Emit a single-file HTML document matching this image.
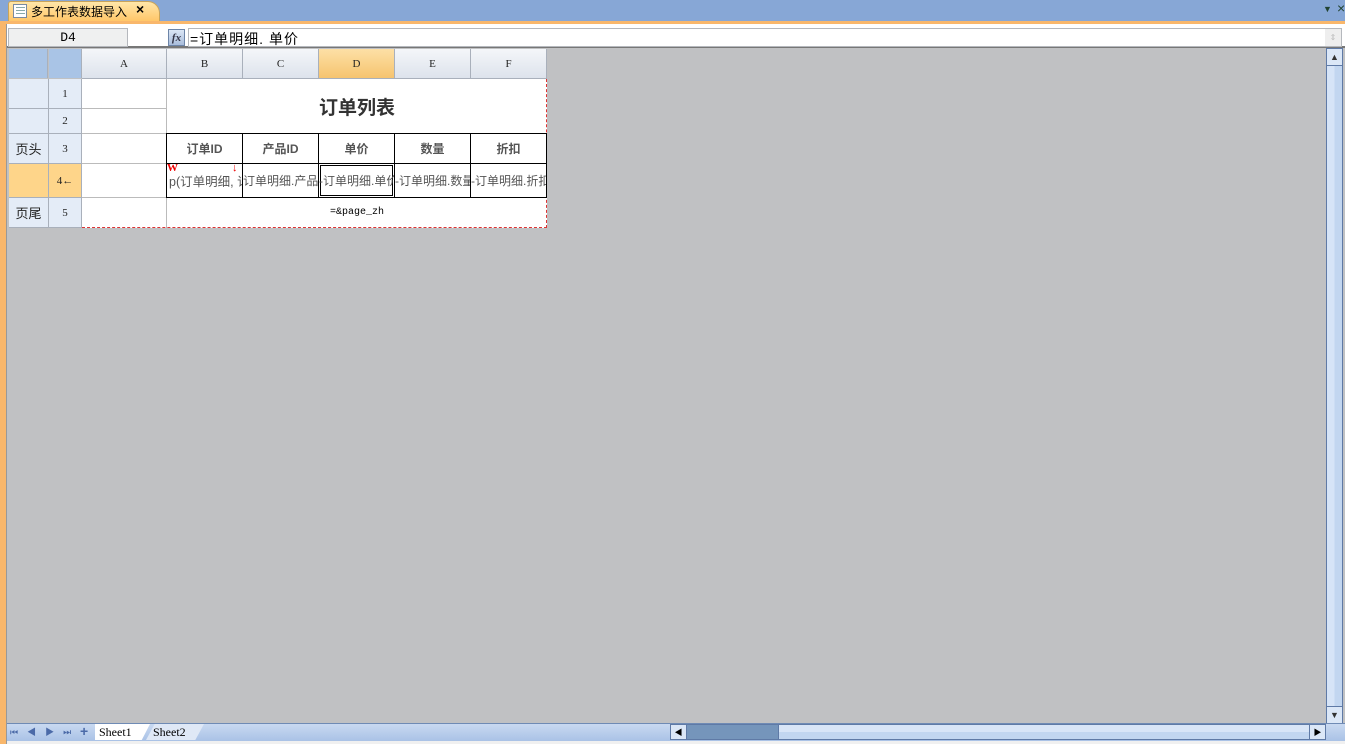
<!DOCTYPE html>
<html><head><meta charset="utf-8">
<style>
*{margin:0;padding:0;box-sizing:border-box}
body{width:1345px;height:744px;overflow:hidden;background:#c0c1c3;position:relative;font-family:"Liberation Sans","Noto Sans CJK SC",sans-serif;font-size:12px}
.a{position:absolute}
.c{position:absolute;display:flex;align-items:center;justify-content:center;white-space:nowrap;overflow:hidden}
.hd{background:linear-gradient(#f4f6f9,#dde3ec);border-right:1px solid #a9b0bb;border-bottom:1px solid #a9b0bb;font-family:"Liberation Serif",serif;font-size:11px;color:#222}
.rh{background:#e4ecf7;border-right:1px solid #a9b0bb;border-bottom:1px solid #a9b0bb;color:#222}
.w{background:#fff}
.b{border:1px solid #000;background:#fff;color:#555;font-weight:bold;font-size:12px}
.d{border:1px solid #000;background:#fff;color:#555;font-size:12px;justify-content:flex-start}
</style></head><body>
<div class="a" style="left:0;top:0;width:1345px;height:21px;background:#87a7d6"></div>
<div class="a" style="left:8px;top:1px;width:152px;height:21px;background:linear-gradient(#ffe6a8,#ffc566);border:1px solid #c9a45a;border-bottom:none;border-radius:3px 12px 0 0"></div>
<div class="a" style="left:13px;top:4px;width:14px;height:14px;background:#fff;border:1px solid #7a8aa0"></div>
<div class="a" style="left:16px;top:7px;width:9px;height:1px;background:#8aa;box-shadow:0 3px #8aa,0 6px #8aa"></div>
<div class="a" style="left:31px;top:3px;font-size:12px;color:#000">多工作表数据导入</div>
<div class="a" style="left:136px;top:1px;font-size:14px;font-weight:bold;color:#000">×</div>
<div class="a" style="left:1323px;top:4px;font-size:9px;color:#243;">▼</div>
<div class="a" style="left:1337px;top:0px;font-size:14px;color:#243;">×</div>
<div class="a" style="left:0;top:21px;width:1345px;height:3px;background:#f9b76b"></div>
<div class="a" style="left:0;top:24px;width:7px;height:720px;background:#f9b76b;border-right:1px solid #999"></div>
<div class="a" style="left:7px;top:24px;width:1338px;height:2px;background:#fff"></div>
<div class="a" style="left:7px;top:26px;width:1338px;height:22px;background:#fff;border-bottom:2px solid #777"></div>
<div class="c" style="left:8px;top:28px;width:120px;height:19px;background:#eff0f0;border:1px solid #b5b8bd;font-family:'Liberation Mono',monospace;font-size:13px">D4</div>
<div class="c" style="left:168px;top:29px;width:17px;height:17px;background:linear-gradient(#dbe6f5,#a9bddb);border:1px solid #6d85a8;font-family:'Liberation Serif',serif;font-style:italic;font-weight:bold;font-size:11px;color:#334">fx</div>
<div class="a" style="left:188px;top:28px;width:1154px;height:19px;border:1px solid #b5b8bd;background:#fff"></div>
<div class="a" style="left:190px;top:29px;font-size:14px;color:#000;letter-spacing:1px">=订单明细. 单价</div>
<div class="c" style="left:1325px;top:29px;width:16px;height:17px;background:#eee;color:#bbb;font-size:8px">⇕</div>
<div class="a" style="left:9px;top:49px;width:39px;height:29px;background:#a9c4e6;border-right:1px solid #a9b0bb"></div>
<div class="a" style="left:49px;top:49px;width:33px;height:29px;background:#a9c4e6;border-right:1px solid #a9b0bb"></div>
<div class="c hd" style="left:82px;top:49px;width:85px;height:30px">A</div>
<div class="c hd" style="left:167px;top:49px;width:76px;height:30px">B</div>
<div class="c hd" style="left:243px;top:49px;width:76px;height:30px">C</div>
<div class="c hd" style="left:319px;top:49px;width:76px;height:30px;background:linear-gradient(#fde0a6,#f6c46f)">D</div>
<div class="c hd" style="left:395px;top:49px;width:76px;height:30px">E</div>
<div class="c hd" style="left:471px;top:49px;width:76px;height:30px">F</div>
<div class="c rh" style="left:9px;top:79px;width:40px;height:30px"></div>
<div class="c rh" style="left:49px;top:79px;width:33px;height:30px;font-family:'Liberation Serif';font-size:11px">1</div>
<div class="c rh" style="left:9px;top:109px;width:40px;height:25px"></div>
<div class="c rh" style="left:49px;top:109px;width:33px;height:25px;font-family:'Liberation Serif';font-size:11px">2</div>
<div class="c rh" style="left:9px;top:134px;width:40px;height:30px;font-size:13px">页头</div>
<div class="c rh" style="left:49px;top:134px;width:33px;height:30px;font-family:'Liberation Serif';font-size:11px">3</div>
<div class="c rh" style="left:9px;top:164px;width:40px;height:34px;background:#fed58a"></div>
<div class="c rh" style="left:49px;top:164px;width:33px;height:34px;background:#fed58a;font-family:'Liberation Serif';font-size:11px">4←</div>
<div class="c rh" style="left:9px;top:198px;width:40px;height:30px;font-size:13px">页尾</div>
<div class="c rh" style="left:49px;top:198px;width:33px;height:30px;font-family:'Liberation Serif';font-size:11px">5</div>
<div class="a w" style="left:82px;top:79px;width:465px;height:149px;border-right:1px dashed #d33;border-bottom:1px dashed #d33"></div>
<div class="a" style="left:82px;top:108px;width:85px;height:1px;background:#bbb"></div>
<div class="a" style="left:82px;top:133px;width:85px;height:1px;background:#bbb"></div>
<div class="a" style="left:82px;top:163px;width:85px;height:1px;background:#bbb"></div>
<div class="a" style="left:82px;top:197px;width:85px;height:1px;background:#bbb"></div>
<div class="a" style="left:166px;top:79px;width:1px;height:149px;background:#bbb"></div>
<div class="c" style="left:167px;top:79px;width:380px;height:55px;font-size:19px;font-weight:bold;color:#333">订单列表</div>
<div class="c b" style="left:166px;top:133px;width:77px;height:31px">订单ID</div>
<div class="c b" style="left:242px;top:133px;width:77px;height:31px">产品ID</div>
<div class="c b" style="left:318px;top:133px;width:77px;height:31px">单价</div>
<div class="c b" style="left:394px;top:133px;width:77px;height:31px">数量</div>
<div class="c b" style="left:470px;top:133px;width:77px;height:31px">折扣</div>
<div class="c d" style="left:166px;top:163px;width:77px;height:35px;padding-left:2px;font-size:12.5px">p(订单明细, 订</div>
<div class="c d" style="left:242px;top:163px;width:77px;height:35px">订单明细.产品</div>
<div class="c d" style="left:318px;top:163px;width:77px;height:35px;box-shadow:inset 0 0 0 1px #fff,inset 0 0 0 2px #000">-订单明细.单价</div>
<div class="c d" style="left:394px;top:163px;width:77px;height:35px">-订单明细.数量</div>
<div class="c d" style="left:470px;top:163px;width:77px;height:35px">-订单明细.折扣</div>
<div class="a" style="left:167px;top:162px;color:#e00;font-weight:bold;font-size:11px;font-family:'Liberation Serif',serif">W</div>
<div class="a" style="left:232px;top:162px;color:#e00;font-size:11px">↓</div>
<div class="c" style="left:167px;top:198px;width:380px;height:29px;font-family:'Liberation Mono',monospace;font-size:10px;color:#000">=&amp;page_zh</div>
<div class="a" style="left:1326px;top:48px;width:17px;height:676px;background:linear-gradient(90deg,#d6e4f7 50%,#c2d6f0 50%);border:1px solid #5f7aa6"></div>
<div class="c" style="left:1326px;top:48px;width:17px;height:18px;background:#dbe7f7;border:1px solid #5f7aa6;font-size:9px;color:#333">▲</div>
<div class="c" style="left:1326px;top:706px;width:17px;height:18px;background:#dbe7f7;border:1px solid #5f7aa6;font-size:9px;color:#333">▼</div>
<div class="a" style="left:7px;top:723px;width:1338px;height:18px;background:linear-gradient(#c9d9f1,#a9c2e6);border-top:1px solid #6f8bb5"></div>
<div class="a" style="left:10px;top:725px;font-size:9px;color:#4b6aa8;letter-spacing:9px">⏮◀▶⏭</div>
<div class="a" style="left:80px;top:723px;font-size:14px;font-weight:bold;color:#4b6aa8">+</div>
<div class="a" style="left:95px;top:724px;width:55px;height:16px;background:#fff;clip-path:polygon(0 0,100% 0,85% 100%,0 100%)"></div>
<div class="a" style="left:99px;top:725px;font-family:'Liberation Serif',serif;font-size:12px">Sheet1</div>
<div class="a" style="left:146px;top:724px;width:58px;height:16px;background:#dfe8f6;clip-path:polygon(15% 0,100% 0,85% 100%,0 100%)"></div>
<div class="a" style="left:153px;top:725px;font-family:'Liberation Serif',serif;font-size:12px">Sheet2</div>
<div class="c" style="left:670px;top:724px;width:17px;height:16px;background:#dbe7f7;border:1px solid #5f7aa6;font-size:8px">◀</div>
<div class="a" style="left:687px;top:724px;width:91px;height:16px;background:#7595bb;border-top:1px solid #5f7aa6;border-bottom:1px solid #5f7aa6"></div>
<div class="a" style="left:778px;top:724px;width:532px;height:16px;background:linear-gradient(#d8e5f7 50%,#c2d6f0 50%);border:1px solid #5f7aa6"></div>
<div class="c" style="left:1309px;top:724px;width:17px;height:16px;background:#dbe7f7;border:1px solid #5f7aa6;font-size:8px">▶</div>
<div class="a" style="left:7px;top:741px;width:1338px;height:3px;background:#f0f0f0"></div>
</body></html>
